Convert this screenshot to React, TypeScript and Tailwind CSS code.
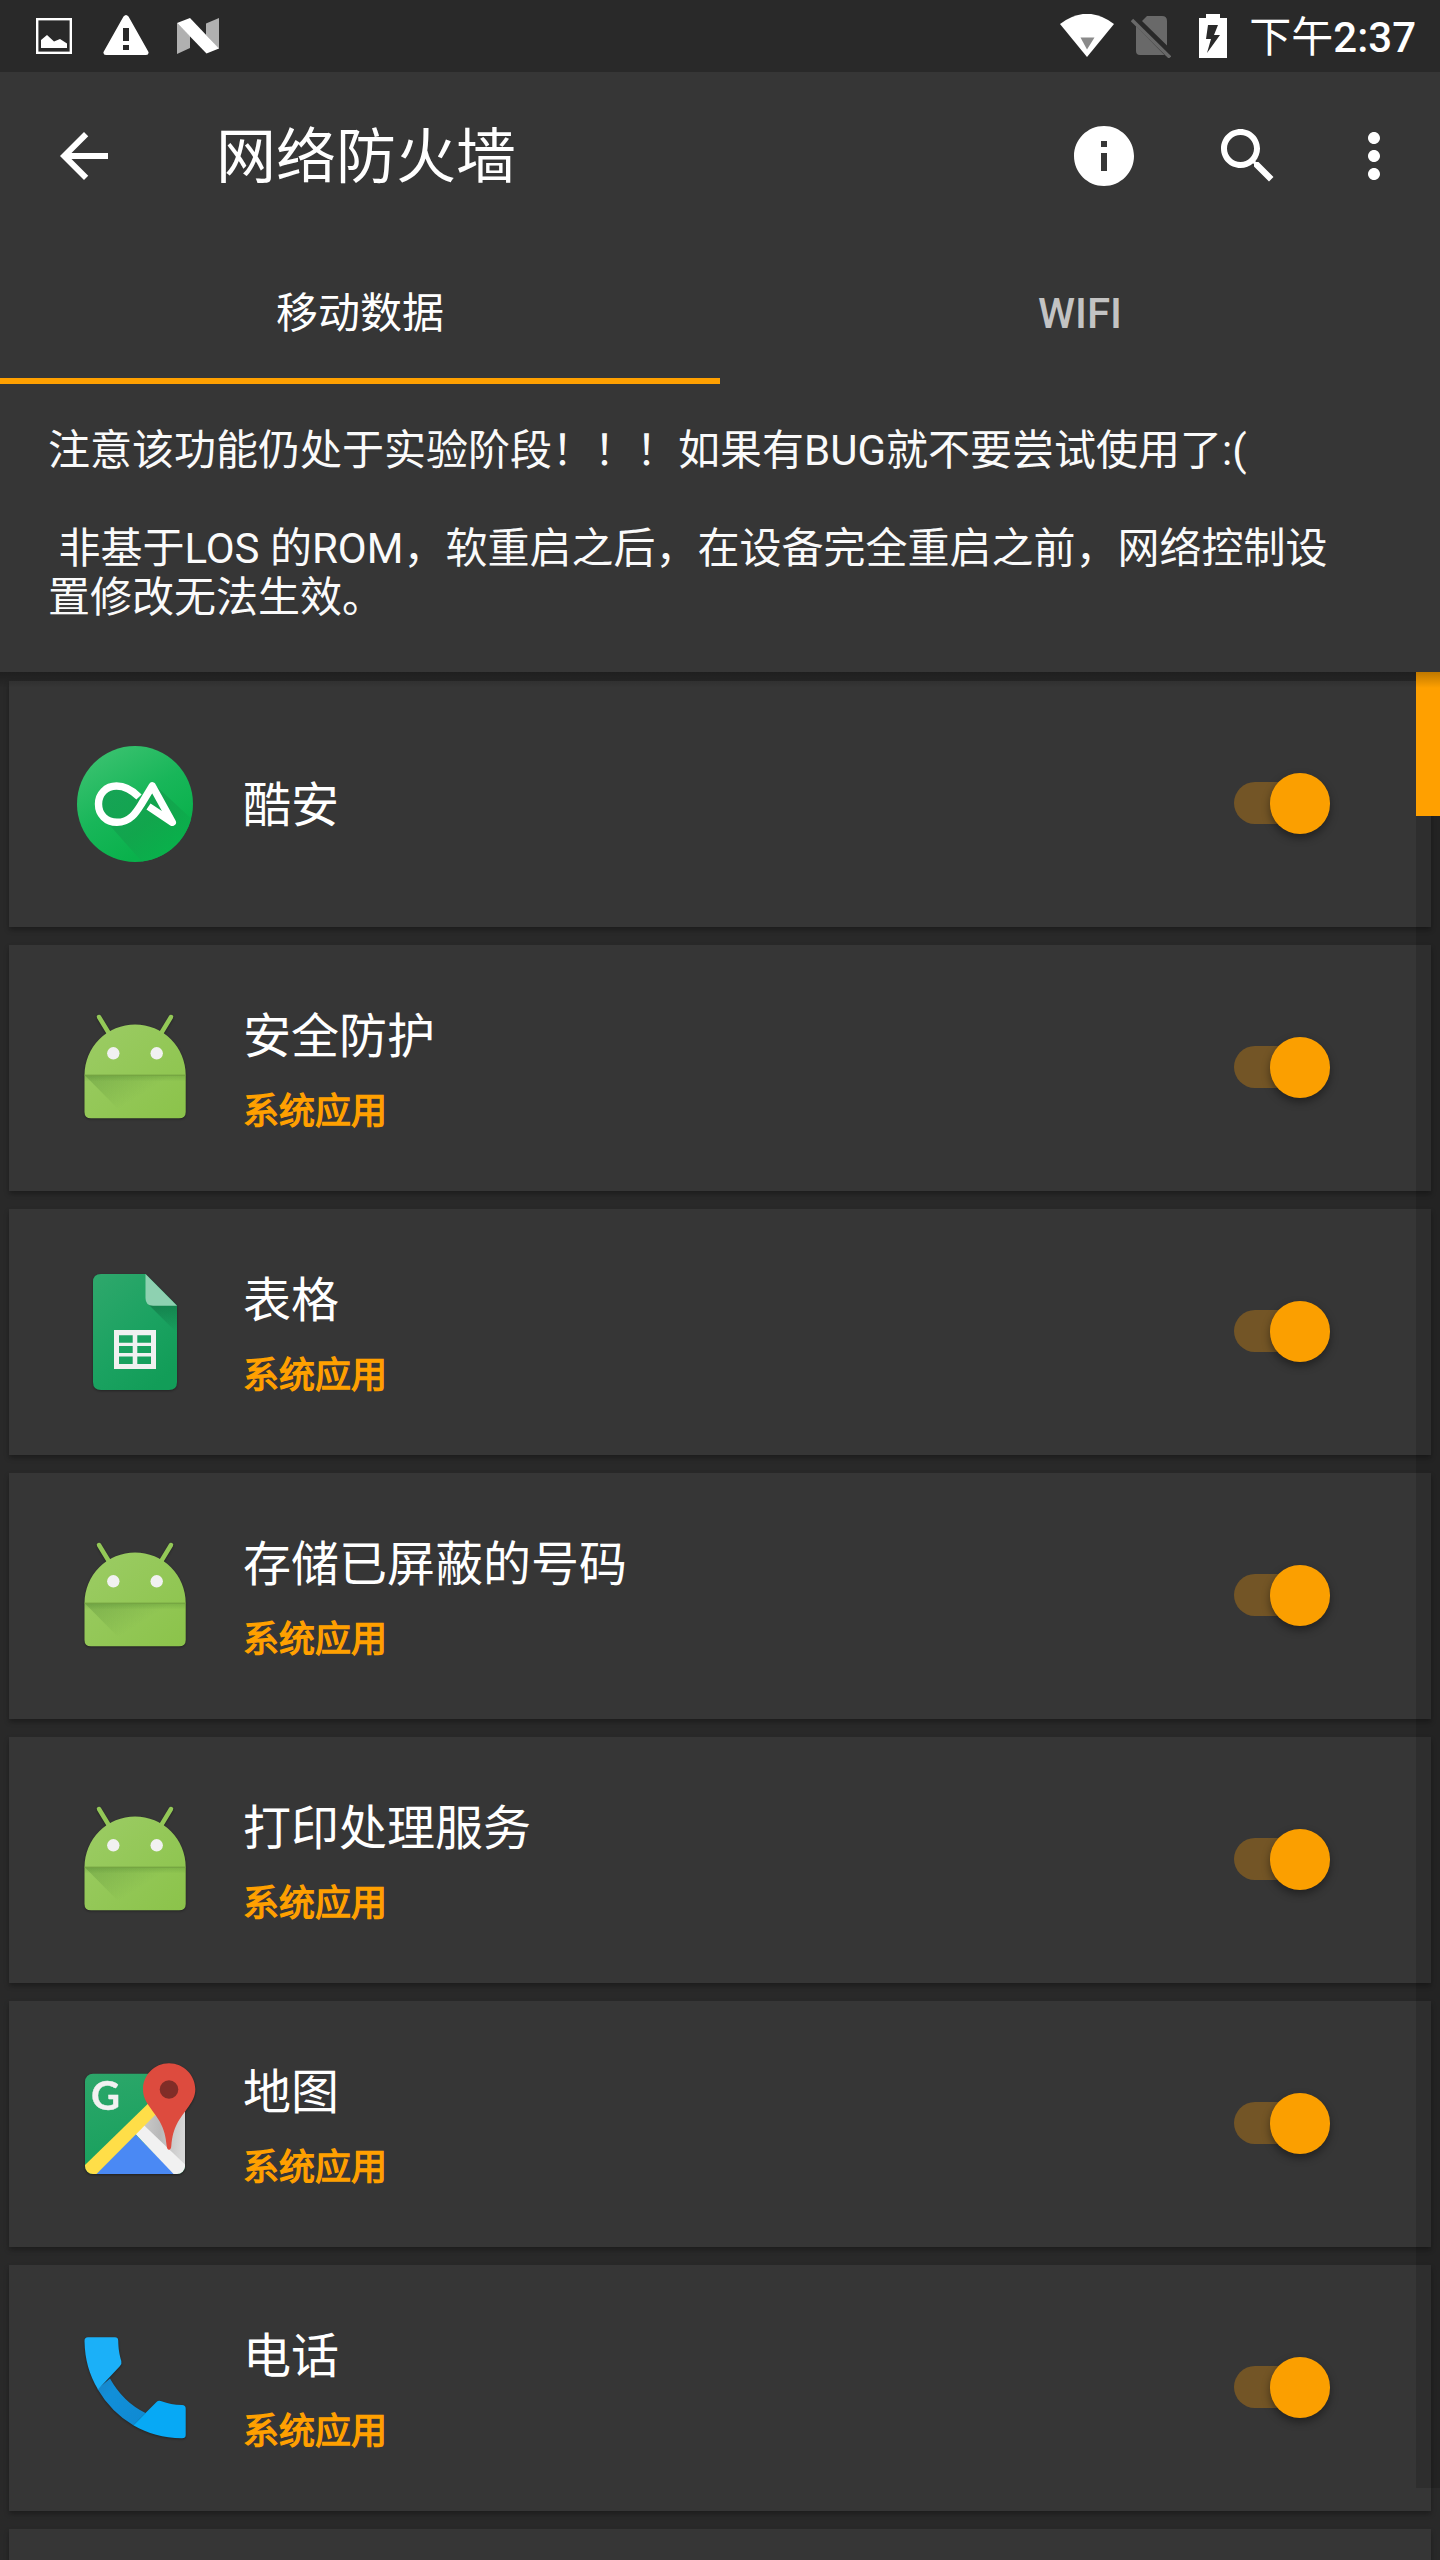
import type { ReactNode } from "react";

const FONT = "font-['Roboto','Noto_Sans_CJK_SC',sans-serif]";

function StatusBar() {
  return (
    <div className="flex h-[72px] shrink-0 items-center bg-[#292929] text-white">
      <svg className="ml-9 h-9 w-9" viewBox="0 0 36 36">
        <rect x="1.2" y="1.2" width="33.6" height="33.6" fill="none" stroke="#fff" strokeWidth="2.4" />
        <path d="M5 30V22l6-5 7 6.5 6-2.5 7 4.500v4.500z" fill="#fff" />
      </svg>
      <svg className="mb-0.5 ml-[30.500px] h-[42px] w-[46px]" viewBox="0 0 46 42">
        <path
          d="M20.500 2.500Q23-.5 25.500 2.500L45.500 38Q46 41 43 41H3Q0 41 .5 38ZM20 14v13h6V14zM20 31v5h6v-5z"
          fill="#fff"
          fillRule="evenodd"
        />
      </svg>
      <svg className="ml-[28.500px] h-9 w-[42px]" viewBox="0 0 42 36">
        <path d="M0 5 13 18V30L0 36ZM29 5.500 42 0V31L29 17Z" fill="#b0b0b0" />
        <path d="M0 5 13 0 42 30.500 29.500 35.500Z" fill="#fff" />
      </svg>
      <div className="flex-1" />
      <svg className="h-11 w-[54px]" viewBox="0 0 54 44">
        <path d="M0 10Q27-10.500 54 10L27 43Z" fill="#fff" />
        <path d="M20.500 23.500H34.500L27 35.500Z" fill="#8a8a8a" />
      </svg>
      <svg className="ml-[17px] h-[44px] w-10" viewBox="0 0 40 44">
        <path d="M11 7 16 2H31Q36 2 36 7V31.500ZM5 12 33.500 41H9Q5 41 5 37Z" fill="#696969" />
        <path d="M1 6 39 43.500" stroke="#696969" strokeWidth="3.400" />
      </svg>
      <svg className="ml-[28px] h-11 w-7" viewBox="0 0 28 44">
        <path d="M7 0H21V4H28V44H0V4H7ZM9 11 7 25H12L8 39 21 21H15L19 11Z" fill="#fff" fillRule="evenodd" />
      </svg>
      <span className="mr-6 ml-[22px] pt-[3px] text-[42px] leading-[48px] font-medium">
        <span className="font-normal">下午</span>2:37
      </span>
    </div>
  );
}

function Toolbar() {
  return (
    <div className="flex h-[168px] items-center text-white">
      <svg className="ml-12 h-[72px] w-[72px]" viewBox="0 0 24 24" fill="currentColor">
        <path d="M20 11H7.830l5.590-5.590L12 4l-8 8 8 8 1.410-1.410L7.830 13H20v-2z" />
      </svg>
      <h1 className="ml-24 flex-1 pt-1 text-[60px] leading-[72px] font-normal">网络防火墙</h1>
      <svg className="h-[72px] w-[72px]" viewBox="0 0 24 24" fill="currentColor">
        <path d="M12 2C6.480 2 2 6.480 2 12s4.480 10 10 10 10-4.480 10-10S17.520 2 12 2zm1 15h-2v-6h2v6zm0-8h-2V7h2v2z" />
      </svg>
      <svg className="ml-[72px] h-[72px] w-[72px]" viewBox="0 0 24 24" fill="currentColor">
        <path d="M15.500 14h-.79l-.28-.27C15.410 12.590 16 11.110 16 9.500 16 5.910 13.090 3 9.500 3S3 5.910 3 9.500 5.910 16 9.500 16c1.610 0 3.090-.59 4.230-1.570l.27.28v.79l5 4.990L20.490 19l-4.990-5zm-6 0C7.010 14 5 11.990 5 9.500S7.010 5 9.500 5 14 7.010 14 9.500 11.990 14 9.500 14z" />
      </svg>
      <svg className="mr-[30px] ml-[54px] h-[72px] w-[72px]" viewBox="0 0 24 24" fill="currentColor">
        <path d="M12 8c1.100 0 2-.9 2-2s-.9-2-2-2-2 .9-2 2 .9 2 2 2zm0 2c-1.100 0-2 .9-2 2s.9 2 2 2 2-.9 2-2-.9-2-2-2zm0 6c-1.100 0-2 .9-2 2s.9 2 2 2 2-.9 2-2-.9-2-2-2z" />
      </svg>
    </div>
  );
}

function Tabs() {
  return (
    <div className="grid h-36 grid-cols-2 text-center text-[42px] leading-[48px]">
      <div className="border-b-[6px] border-[#ffa000] pt-[50px] text-white">移动数据</div>
      <div className="pt-[50px] font-medium text-[#c3c3c3]">WIFI</div>
    </div>
  );
}

function CoolApkIcon() {
  return (
    <svg className="h-[120px] w-[120px]" viewBox="0 0 120 120">
      <defs>
        <linearGradient id="cool" x1="0.15" y1="0.15" x2="0.6" y2="0.9">
          <stop offset="0" stopColor="#35c06c" />
          <stop offset="0.5" stopColor="#18b659" />
          <stop offset="1" stopColor="#09b14b" />
        </linearGradient>
        <linearGradient id="coolShade" x1="0.2" y1="0.2" x2="0.8" y2="0.8">
          <stop offset="0" stopColor="#14a052" />
          <stop offset="0.5" stopColor="#12a34c" />
          <stop offset="1" stopColor="#09b14b" />
        </linearGradient>
        <clipPath id="coolClip">
          <circle cx="60" cy="60" r="58" />
        </clipPath>
      </defs>
      <circle cx="60" cy="60" r="58" fill="url(#cool)" />
      <path
        clipPath="url(#coolClip)"
        d="M79 40 120 78V120H69L30 76 22 60 32 45 45 42 66 56Z"
        fill="url(#coolShade)"
        opacity="0.85"
      />
      <path
        d="M64 53C57 46 50 42 41.500 42C31 42 23.500 50 23.500 60C23.500 70.500 31 78.300 42 78.300C56 78.300 62 67 67 59L77.300 42L97.300 78.300L73.500 62.500"
        fill="none"
        stroke="#fff"
        strokeWidth="7.400"
        strokeLinejoin="round"
      />
    </svg>
  );
}

function AndroidIcon() {
  return (
    <svg className="h-[120px] w-[120px] drop-shadow-[0_1px_1px_rgba(0,0,0,0.35)]" viewBox="0 0 120 120">
      <defs>
        <linearGradient id="droid" x1="0" y1="0" x2="1" y2="1">
          <stop offset="0" stopColor="#9ccc65" />
          <stop offset="1" stopColor="#8bc34a" />
        </linearGradient>
        <linearGradient id="droidShade" x1="0" y1="0" x2="0.6" y2="0.4">
          <stop offset="0" stopColor="#33691e" stopOpacity="0.26" />
          <stop offset="1" stopColor="#33691e" stopOpacity="0" />
        </linearGradient>
        <linearGradient id="droidEdge" x1="0" y1="0" x2="0" y2="1">
          <stop offset="0" stopColor="#33691e" stopOpacity="0.2" />
          <stop offset="1" stopColor="#33691e" stopOpacity="0" />
        </linearGradient>
      </defs>
      <path d="M24 9 34 25.500M96 9 86 25.500" stroke="#93c857" strokeWidth="4.400" strokeLinecap="round" />
      <path
        d="M9.500 67A50.600 50.600 0 0 1 110.700 67V104Q110.700 110.300 104 110.300H16Q9.500 110.300 9.500 104Z"
        fill="url(#droid)"
      />
      <path d="M10 67.500H110.500V104Q110.500 110 104 110H52Z" fill="url(#droidShade)" />
      <rect x="9.500" y="67.500" width="101" height="6" fill="url(#droidEdge)" />
      <rect x="9.500" y="66.700" width="101" height="1" fill="#6f9d3e" />
      <circle cx="38.300" cy="45.300" r="6.200" fill="#f1f1f1" />
      <circle cx="81.700" cy="45.300" r="6.200" fill="#f1f1f1" />
    </svg>
  );
}

function SheetsIcon() {
  return (
    <svg className="h-[120px] w-[120px] drop-shadow-[0_1px_1px_rgba(0,0,0,0.35)]" viewBox="0 0 120 120">
      <defs>
        <linearGradient id="sheet" x1="0" y1="0" x2="0.7" y2="1">
          <stop offset="0" stopColor="#2fa86c" />
          <stop offset="0.6" stopColor="#1ba261" />
          <stop offset="1" stopColor="#129d58" />
        </linearGradient>
        <linearGradient id="sheetShade" x1="0.5" y1="0" x2="0.6" y2="1">
          <stop offset="0" stopColor="#0c5f38" stopOpacity="0.5" />
          <stop offset="1" stopColor="#0c5f38" stopOpacity="0" />
        </linearGradient>
      </defs>
      <path d="M26 2H70.500L102 33.500V110Q102 118 94 118H26Q18 118 18 110V10Q18 2 26 2Z" fill="url(#sheet)" />
      <path d="M72.500 31.500 102 33.500V61Z" fill="url(#sheetShade)" />
      <path d="M70.500 2 102 33.700H78Q70.500 33.700 70.500 26Z" fill="#8ed1b1" />
      <path
        d="M39 58H81V97H39ZM44 63.300V70.700H57.700V63.300ZM62.300 63.300V70.700H76V63.300ZM44 74V81H57.700V74ZM62.300 74V81H76V74ZM44 84.500V92H57.700V84.500ZM62.300 84.500V92H76V84.500Z"
        fill="#f1f1f1"
        fillRule="evenodd"
      />
    </svg>
  );
}

function MapsIcon() {
  return (
    <svg className="h-[120px] w-[120px] overflow-visible drop-shadow-[0_1px_1px_rgba(0,0,0,0.4)]" viewBox="0 0 120 120">
      <defs>
        <clipPath id="mapClip">
          <rect x="10" y="9.700" width="100" height="100.300" rx="8" />
        </clipPath>
        <linearGradient id="mapGreen" x1="0" y1="0" x2="0.3" y2="1">
          <stop offset="0" stopColor="#2fa86c" />
          <stop offset="1" stopColor="#159f5b" />
        </linearGradient>
        <linearGradient id="mapGrey" x1="0" y1="0" x2="1" y2="0.2">
          <stop offset="0" stopColor="#cfcfcf" />
          <stop offset="0.5" stopColor="#b9b9b9" />
          <stop offset="1" stopColor="#d8d8d8" />
        </linearGradient>
      </defs>
      <g clipPath="url(#mapClip)">
        <rect width="120" height="120" fill="url(#mapGreen)" />
        <path d="M112 18 66 62 112 106Z" fill="url(#mapGrey)" />
        <path d="M60 70 19 112H102Z" fill="#4a89f4" />
        <path d="M68.700 61 60 69.500 100.500 112H122Z" fill="#f1f1f1" />
        <path d="M86 27 8 103V112H19.500L104 27Z" fill="#ffde48" />
      </g>
      <text
        x="16"
        y="46.400"
        fontSize="40"
        className="font-['Lato'] font-bold"
        fill="#f1f1f1"
        stroke="#f1f1f1"
        strokeWidth="0.3"
      >
        G
      </text>
      <path
        d="M94-.7C79.500-.7 68 11 68 25.300C68 32 70.500 37 74 42C84 56 90 62 91.700 82Q92 85.700 94 85.700T96.300 82C98 62 104 56 114 42C117.500 37 120.300 32 120.300 25.300C120.300 11 108.500-.7 94-.7Z"
        fill="#dd4b3e"
      />
      <circle cx="94" cy="25.500" r="9.300" fill="#802d27" />
    </svg>
  );
}

function PhoneIcon() {
  return (
    <svg className="h-[120px] w-[120px] drop-shadow-[0_1px_1px_rgba(0,0,0,0.35)]" viewBox="0 0 120 120">
      <defs>
        <linearGradient id="phoneMid" x1="0" y1="0" x2="1" y2="1">
          <stop offset="0" stopColor="#1a83c5" />
          <stop offset="0.3" stopColor="#118fd9" />
          <stop offset="1" stopColor="#1089d1" />
        </linearGradient>
      </defs>
      <path d="M35 50.500Q48 74 70.500 85L58.300 97.300Q36 84 22.500 61Z" fill="url(#phoneMid)" />
      <path
        d="M13 9.300H40Q43 9.300 43.200 12.500C43.400 21 44.300 26 46.300 33Q47 36 45 38L23 61.500C14 46 10 32 9.500 13Q9.500 9.300 13 9.300Z"
        fill="#1bb0f8"
      />
      <path
        d="M58.300 97.300 81.500 74Q83.500 72 86.500 73.200C93 75.500 99 76.700 107 77Q110.700 77.200 110.700 80.500V107Q110.700 110.300 107 110.300C88 110 73 105.500 58.300 97.300Z"
        fill="#07a9f5"
      />
    </svg>
  );
}

function Switch() {
  return (
    <div className="relative mr-[101px] h-[60px] w-24">
      <div className="absolute top-[8px] left-0 h-[42px] w-[90px] rounded-full bg-[#735526]" />
      <div className="absolute top-[-1px] right-0 h-[60.500px] w-[60.500px] rounded-full bg-[#fb9f00] shadow-[0_4px_8px_rgba(0,0,0,0.4)]" />
    </div>
  );
}

type App = { name: string; icon: ReactNode; system: boolean };

const APPS: App[] = [
  { name: "酷安", icon: <CoolApkIcon />, system: false },
  { name: "安全防护", icon: <AndroidIcon />, system: true },
  { name: "表格", icon: <SheetsIcon />, system: true },
  { name: "存储已屏蔽的号码", icon: <AndroidIcon />, system: true },
  { name: "打印处理服务", icon: <AndroidIcon />, system: true },
  { name: "地图", icon: <MapsIcon />, system: true },
  { name: "电话", icon: <PhoneIcon />, system: true },
];

const CARD = "h-[246px] shrink-0 bg-[#363636] shadow-[0_3px_5px_rgba(0,0,0,0.3)]";

function AppCard({ app }: { app: App }) {
  return (
    <div className={`flex items-center ${CARD}`}>
      <div className="ml-[66px]">{app.icon}</div>
      <div className="ml-12 flex-1 pt-1">
        <div className="text-[48px] leading-[72px] text-white">{app.name}</div>
        {app.system && (
          <div className="mt-[12px] mb-px text-[36px] leading-[54px] text-[#ffa000] [-webkit-text-stroke:1.300px_#ffa000]">
            系统应用
          </div>
        )}
      </div>
      <Switch />
    </div>
  );
}

export default function App() {
  return (
    <div className={`flex h-[2560px] w-[1440px] flex-col overflow-hidden bg-[#292929] ${FONT}`}>
      <StatusBar />
      <header className="h-[600px] shrink-0 bg-[#363636]">
        <Toolbar />
        <Tabs />
        <p className="px-12 pt-[42px] text-[42px] leading-[49px] text-[#fafafa]">
          注意该功能仍处于实验阶段！！！如果有BUG就不要尝试使用了:(
          <br />
          <br />
          <span className="whitespace-pre"> </span>非基于LOS 的ROM，软重启之后，在设备完全重启之前，网络控制设
          <br />
          置修改无法生效。
        </p>
      </header>
      <main className="relative flex min-h-0 flex-1 flex-col gap-[18px] overflow-hidden px-[9px] pt-[9px]">
        {APPS.map((app) => (
          <AppCard key={app.name} app={app} />
        ))}
        <div className={CARD} />
        <div className="absolute top-0 right-0 h-[1816px] w-6 bg-black/14">
          <div className="h-36 bg-[#ffa000]" />
        </div>
        <div className="absolute inset-x-0 top-0 h-4 bg-linear-to-b from-black/25 to-transparent" />
      </main>
    </div>
  );
}
